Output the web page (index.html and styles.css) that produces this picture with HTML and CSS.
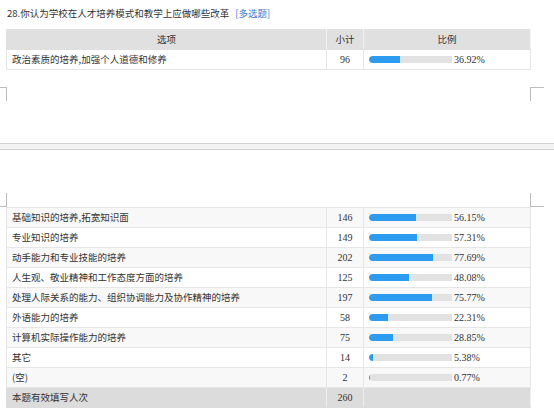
FILE: index.html
```html
<!DOCTYPE html>
<html lang="zh">
<head>
<meta charset="utf-8">
<link rel="stylesheet" href="styles.css">
</head>
<body>
<div class="doc">
  <div class="title">28.你认为学校在人才培养模式和教学上应做哪些改革 <span class="tag">[多选题]</span></div>
  <table class="stat">
    <colgroup><col class="c1"><col class="c2"><col class="c3"></colgroup>
    <tr class="head"><td>选项</td><td class="num">小计</td><td class="center">比例</td></tr>
    <tr><td>政治素质的培养,加强个人道德和修养</td><td class="num">96</td><td><div class="pc"><span class="track"><span class="fill" style="width:36.92%"></span></span><span class="pv">36.92%</span></div></td></tr>
  </table>
  <div class="marks end">
    <span class="mk mk-l"></span><span class="mk mk-r"></span>
  </div>
  <div class="gap"></div>
  <div class="marks start">
    <span class="mk mk-l"></span><span class="mk mk-r"></span>
  </div>
  <table class="stat">
    <colgroup><col class="c1"><col class="c2"><col class="c3"></colgroup>
    <tr class="alt"><td>基础知识的培养,拓宽知识面</td><td class="num">146</td><td><div class="pc"><span class="track"><span class="fill" style="width:56.15%"></span></span><span class="pv">56.15%</span></div></td></tr>
    <tr><td>专业知识的培养</td><td class="num">149</td><td><div class="pc"><span class="track"><span class="fill" style="width:57.31%"></span></span><span class="pv">57.31%</span></div></td></tr>
    <tr class="alt"><td>动手能力和专业技能的培养</td><td class="num">202</td><td><div class="pc"><span class="track"><span class="fill" style="width:77.69%"></span></span><span class="pv">77.69%</span></div></td></tr>
    <tr><td>人生观、敬业精神和工作态度方面的培养</td><td class="num">125</td><td><div class="pc"><span class="track"><span class="fill" style="width:48.08%"></span></span><span class="pv">48.08%</span></div></td></tr>
    <tr class="alt"><td>处理人际关系的能力、组织协调能力及协作精神的培养</td><td class="num">197</td><td><div class="pc"><span class="track"><span class="fill" style="width:75.77%"></span></span><span class="pv">75.77%</span></div></td></tr>
    <tr><td>外语能力的培养</td><td class="num">58</td><td><div class="pc"><span class="track"><span class="fill" style="width:22.31%"></span></span><span class="pv">22.31%</span></div></td></tr>
    <tr class="alt"><td>计算机实际操作能力的培养</td><td class="num">75</td><td><div class="pc"><span class="track"><span class="fill" style="width:28.85%"></span></span><span class="pv">28.85%</span></div></td></tr>
    <tr><td>其它</td><td class="num">14</td><td><div class="pc"><span class="track"><span class="fill" style="width:5.38%"></span></span><span class="pv">5.38%</span></div></td></tr>
    <tr class="alt"><td>(空)</td><td class="num">2</td><td><div class="pc"><span class="track"><span class="fill" style="width:0.77%"></span></span><span class="pv">0.77%</span></div></td></tr>
    <tr class="total"><td>本题有效填写人次</td><td class="num">260</td><td></td></tr>
  </table>
</div>
</body>
</html>
```

FILE: styles.css
```css
html, body {
  margin: 0;
  padding: 0;
  background: #ffffff;
}
.doc {
  width: 554px;
  height: 419px;
  overflow: hidden;
  font-family: "Noto Sans CJK SC", "Liberation Sans", sans-serif;
  font-size: 9.5px;
  color: #333333;
}
.title {
  padding: 6px 0 0 7px;
  height: 29px;
  line-height: 14px;
  box-sizing: border-box;
}
.tag {
  color: #3a7bd5;
  margin-left: 4px;
}
.stat {
  margin-left: 6px;
  width: 524px;
  border-collapse: collapse;
  table-layout: fixed;
}
.c1 { width: 320px; }
.c2 { width: 37px; }
.c3 { width: 167px; }
.stat td {
  height: 19px;
  padding: 0 0 0 5px;
  border: 1px solid #e6e6e6;
  line-height: 19px;
  white-space: nowrap;
  overflow: hidden;
  vertical-align: middle;
}
.stat tr.head td {
  background: #e0e0e0;
  text-align: center;
  padding: 0;
  border-color: #e0e0e0;
  border-right-color: #f2f2f2;
}
.stat tr.alt td {
  background: #f8f8f8;
}
.stat tr.total td {
  background: #dcdcdc;
  border-color: #dcdcdc;
  border-right-color: #eeeeee;
}
.stat td.num {
  text-align: center;
  padding: 0;
  font-family: "Liberation Serif", "Noto Sans CJK SC", serif;
  font-size: 10px;
}
.stat tr.head td.num {
  font-family: "Noto Sans CJK SC", sans-serif;
  font-size: 9.5px;
}
.pc {
  display: flex;
  align-items: center;
  gap: 2px;
}
.track {
  display: block;
  width: 83px;
  height: 7px;
  background: #e2e2e2;
  border-radius: 4px 0 0 4px;
  overflow: hidden;
}
.fill {
  display: block;
  height: 100%;
  background: #2b9cf0;
  border-radius: 4px 0 0 4px;
}
.pv {
  font-family: "Liberation Serif", serif;
  font-size: 10px;
}
.marks {
  display: flex;
  justify-content: space-between;
  width: 544px;
}
.mk {
  display: block;
  height: 14px;
  box-sizing: border-box;
}
.end {
  margin-top: 17px;
}
.end .mk-l {
  width: 7px;
  border-top: 1px solid #bdbdbd;
  border-right: 1px solid #bdbdbd;
}
.end .mk-r {
  width: 14px;
  border-top: 1px solid #bdbdbd;
  border-left: 1px solid #bdbdbd;
}
.gap {
  margin-top: 42px;
  height: 7px;
  box-sizing: border-box;
  border-top: 1px solid #d2d2d2;
  border-bottom: 1px solid #d2d2d2;
  background: #f3f3f3;
}
.start {
  margin-top: 43px;
}
.start .mk-l {
  width: 7px;
  border-bottom: 1px solid #bdbdbd;
  border-right: 1px solid #bdbdbd;
}
.start .mk-r {
  width: 14px;
  border-bottom: 1px solid #bdbdbd;
  border-left: 1px solid #bdbdbd;
}
```
